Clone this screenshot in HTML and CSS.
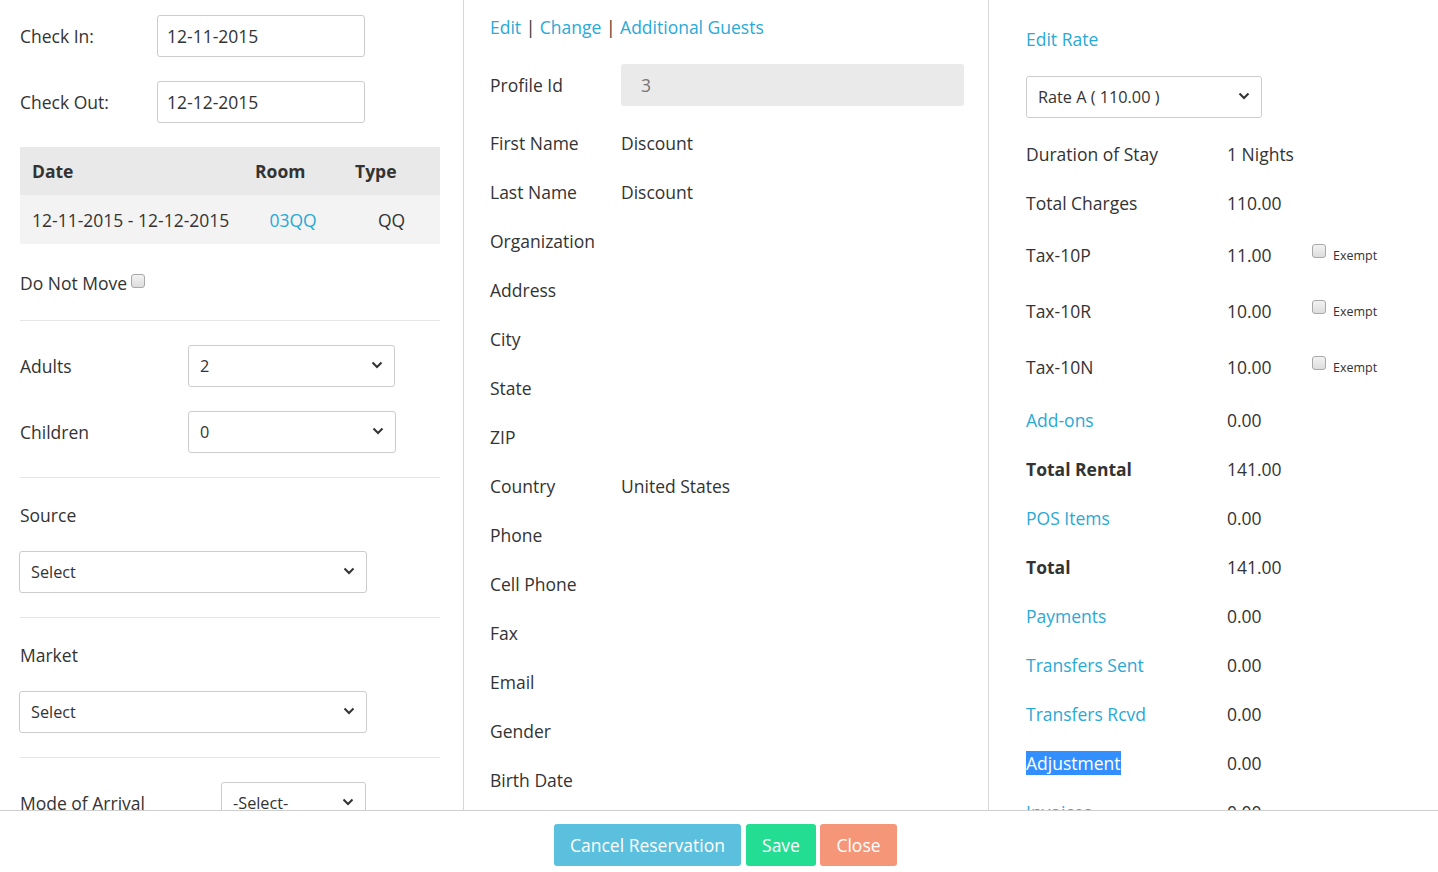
FILE: index.html
```html
<!DOCTYPE html>
<html>
<head>
<meta charset="utf-8">
<title>Reservation</title>
<link rel="stylesheet" href="styles.css">
</head>
<body>
<div class="page">
  <div class="main">
    <div class="col col-left">
      <div class="field-row mb24">
        <div class="lbl lbl-137">Check In:</div>
        <div class="textbox">12-11-2015</div>
      </div>
      <div class="field-row mb24">
        <div class="lbl lbl-137">Check Out:</div>
        <div class="textbox">12-12-2015</div>
      </div>
      <table class="rooms">
        <thead>
          <tr><th class="c1">Date</th><th class="c2">Room</th><th class="c3">Type</th></tr>
        </thead>
        <tbody>
          <tr><td class="c1">12-11-2015 - 12-12-2015</td><td class="c2 center"><a class="link">03QQ</a></td><td class="c3 center">QQ</td></tr>
        </tbody>
      </table>
      <div class="donotmove">Do Not Move<span class="cb cb-dnm"></span></div>
      <div class="sep"></div>
      <div class="field-row mb24">
        <div class="lbl lbl-168">Adults</div>
        <div class="select w207"><span>2</span><svg class="chev" width="12" height="8" viewBox="0 0 12 8"><path d="M1.5 1.5 L6 6 L10.5 1.5" fill="none" stroke="#333" stroke-width="2"/></svg></div>
      </div>
      <div class="field-row">
        <div class="lbl lbl-168">Children</div>
        <div class="select w208"><span>0</span><svg class="chev" width="12" height="8" viewBox="0 0 12 8"><path d="M1.5 1.5 L6 6 L10.5 1.5" fill="none" stroke="#333" stroke-width="2"/></svg></div>
      </div>
      <div class="sep"></div>
      <div class="section-label">Source</div>
      <div class="select w347"><span>Select</span><svg class="chev" width="12" height="8" viewBox="0 0 12 8"><path d="M1.5 1.5 L6 6 L10.5 1.5" fill="none" stroke="#333" stroke-width="2"/></svg></div>
      <div class="sep"></div>
      <div class="section-label">Market</div>
      <div class="select w347"><span>Select</span><svg class="chev" width="12" height="8" viewBox="0 0 12 8"><path d="M1.5 1.5 L6 6 L10.5 1.5" fill="none" stroke="#333" stroke-width="2"/></svg></div>
      <div class="sep"></div>
      <div class="field-row">
        <div class="lbl lbl-201">Mode of Arrival</div>
        <div class="select w145"><span>-Select-</span><svg class="chev" width="12" height="8" viewBox="0 0 12 8"><path d="M1.5 1.5 L6 6 L10.5 1.5" fill="none" stroke="#333" stroke-width="2"/></svg></div>
      </div>
    </div>

    <div class="col col-mid">
      <div class="links"><a class="link">Edit</a> | <a class="link">Change</a> | <a class="link">Additional Guests</a></div>
      <div class="field-row mt24">
        <div class="lbl lbl-131">Profile Id</div>
        <div class="ro-input">3</div>
      </div>
      <div class="info-row"><div class="lbl lbl-131">First Name</div><div>Discount</div></div>
      <div class="info-row"><div class="lbl lbl-131">Last Name</div><div>Discount</div></div>
      <div class="info-row"><div class="lbl lbl-131">Organization</div><div></div></div>
      <div class="info-row"><div class="lbl lbl-131">Address</div><div></div></div>
      <div class="info-row"><div class="lbl lbl-131">City</div><div></div></div>
      <div class="info-row"><div class="lbl lbl-131">State</div><div></div></div>
      <div class="info-row"><div class="lbl lbl-131">ZIP</div><div></div></div>
      <div class="info-row"><div class="lbl lbl-131">Country</div><div>United States</div></div>
      <div class="info-row"><div class="lbl lbl-131">Phone</div><div></div></div>
      <div class="info-row"><div class="lbl lbl-131">Cell Phone</div><div></div></div>
      <div class="info-row"><div class="lbl lbl-131">Fax</div><div></div></div>
      <div class="info-row"><div class="lbl lbl-131">Email</div><div></div></div>
      <div class="info-row"><div class="lbl lbl-131">Gender</div><div></div></div>
      <div class="info-row"><div class="lbl lbl-131">Birth Date</div><div></div></div>
    </div>

    <div class="col col-right">
      <div class="edit-rate"><a class="link">Edit Rate</a></div>
      <div class="select w236 rate-select"><span>Rate A ( 110.00 )</span><svg class="chev" width="12" height="8" viewBox="0 0 12 8"><path d="M1.5 1.5 L6 6 L10.5 1.5" fill="none" stroke="#333" stroke-width="2"/></svg></div>
      <div class="r-row mt24"><div class="r-lbl">Duration of Stay</div><div class="r-val">1 Nights</div></div>
      <div class="r-row"><div class="r-lbl">Total Charges</div><div class="r-val">110.00</div></div>
      <div class="r-row tax mt24"><div class="r-lbl">Tax-10P</div><div class="r-val">11.00</div><div class="exempt"><span class="cb"></span><span class="ex-txt">Exempt</span></div></div>
      <div class="r-row tax"><div class="r-lbl">Tax-10R</div><div class="r-val">10.00</div><div class="exempt"><span class="cb"></span><span class="ex-txt">Exempt</span></div></div>
      <div class="r-row tax"><div class="r-lbl">Tax-10N</div><div class="r-val">10.00</div><div class="exempt"><span class="cb"></span><span class="ex-txt">Exempt</span></div></div>
      <div class="r-row mt26"><div class="r-lbl"><a class="link">Add-ons</a></div><div class="r-val">0.00</div></div>
      <div class="r-row"><div class="r-lbl bold">Total Rental</div><div class="r-val">141.00</div></div>
      <div class="r-row"><div class="r-lbl"><a class="link">POS Items</a></div><div class="r-val">0.00</div></div>
      <div class="r-row"><div class="r-lbl bold">Total</div><div class="r-val">141.00</div></div>
      <div class="r-row"><div class="r-lbl"><a class="link">Payments</a></div><div class="r-val">0.00</div></div>
      <div class="r-row"><div class="r-lbl"><a class="link">Transfers Sent</a></div><div class="r-val">0.00</div></div>
      <div class="r-row"><div class="r-lbl"><a class="link">Transfers Rcvd</a></div><div class="r-val">0.00</div></div>
      <div class="r-row"><div class="r-lbl"><a class="link selected">Adjustment</a></div><div class="r-val">0.00</div></div>
      <div class="r-row"><div class="r-lbl"><a class="link">Invoices</a></div><div class="r-val">0.00</div></div>
    </div>
  </div>
  <div class="footer">
    <button class="btn btn-cancel">Cancel Reservation</button>
    <button class="btn btn-save">Save</button>
    <button class="btn btn-close">Close</button>
  </div>
</div>
</body>
</html>
```

FILE: styles.css
```css
* { box-sizing: border-box; }
html, body { margin: 0; padding: 0; }
body {
  font-family: "Open Sans", "Liberation Sans", sans-serif;
  font-size: 17.5px;
  line-height: 24px;
  color: #333;
  background: #fff;
}
.page {
  width: 1438px;
  height: 872px;
  display: flex;
  flex-direction: column;
  overflow: hidden;
}
.main {
  height: 810px;
  flex: none;
  display: flex;
  overflow: hidden;
}
.col { height: 810px; overflow: hidden; }
.col-left {
  width: 464px;
  border-right: 1px solid #d6d6d6;
  padding: 15px 23px 0 20px;
}
.col-mid {
  width: 525px;
  border-right: 1px solid #d6d6d6;
  padding: 15px 24px 0 26px;
}
.col-right {
  flex: 1;
  padding: 27px 0 0 37px;
}
.link { color: #29a9d6; text-decoration: none; cursor: pointer; }
.bold { font-weight: 700; }
.mb24 { margin-bottom: 24px; }
.mt24 { margin-top: 24px; }
.mt26 { margin-top: 26px !important; }

.field-row { display: flex; align-items: center; height: 42px; }
.lbl { flex: none; }
.lbl-137 { width: 137px; }
.lbl-168 { width: 168px; }
.lbl-201 { width: 201px; }
.lbl-131 { width: 131px; }

.textbox {
  width: 208px;
  height: 42px;
  border: 1px solid #ccc;
  border-radius: 3px;
  padding: 0 9px;
  display: flex;
  align-items: center;
}

.rooms {
  width: 420px;
  border-collapse: collapse;
  border-spacing: 0;
}
.rooms th {
  height: 48px;
  background: #e9e9e9;
  text-align: left;
  font-weight: 700;
  padding: 0 12px;
}
.rooms td {
  height: 49px;
  background: #f3f3f3;
  padding: 0 12px;
}
.rooms .c1 { width: 223px; }
.rooms .c2 { width: 100px; }
.rooms .c3 { width: 97px; }
.rooms td.center { text-align: center; padding: 0; }

.donotmove {
  margin-top: 27px;
  height: 25px;
  display: flex;
  align-items: flex-start;
}
.cb {
  display: inline-block;
  flex: none;
  width: 14px;
  height: 14px;
  border: 1px solid #a8a8a8;
  border-radius: 3px;
  background: linear-gradient(#f2f2f2, #dddddd);
}
.cb-dnm { margin: 3px 0 0 4px; }

.sep { height: 1px; background: #e6e6e6; margin: 24px 0; }

.section-label { padding-top: 1px; margin-bottom: 24px; line-height: 24px; }

.select {
  height: 42px;
  border: 1px solid #ccc;
  border-radius: 3px;
  padding: 0 11px;
  display: flex;
  align-items: center;
  justify-content: space-between;
  font-size: 16.25px;
  background: #fff;
}
.chev { flex: none; margin-top: -3px; }
.w207 { width: 207px; }
.w208 { width: 208px; }
.w347 { width: 348px; margin-left: -1px; }
.w145 { width: 145px; }
.w236 { width: 236px; }

.links { line-height: 24px; }
.ro-input {
  flex: 1;
  height: 42px;
  background: #eaeaea;
  border-radius: 3px;
  padding-left: 20px;
  display: flex;
  align-items: center;
  color: #777;
}
.info-row {
  display: flex;
  margin-top: 25px;
  line-height: 24px;
  height: 24px;
}
.col-mid .field-row.mt24 { margin-top: 25px; }

.edit-rate { line-height: 24px; }
.rate-select { margin-top: 25px; }
.r-row {
  display: flex;
  align-items: center;
  height: 24px;
  margin-top: 25px;
}
.r-row.mt24 { margin-top: 24px; }
.r-lbl { width: 201px; flex: none; }
.r-val { width: 85px; flex: none; }
.r-row.tax { height: 31px; }
.exempt {
  display: flex;
  align-items: flex-start;
  height: 31px;
  padding-top: 5px;
}
.ex-txt {
  font-size: 12.5px;
  line-height: 16px;
  margin: 4px 0 0 7px;
}
.selected { background: #338fff; color: #fff; }

.footer {
  flex: 1;
  border-top: 1px solid #cfcfcf;
  display: flex;
  justify-content: center;
  align-items: flex-start;
  padding: 13px 0 0 13px;
}
.btn {
  height: 42px;
  border: none;
  border-radius: 3px;
  color: #fff;
  font-family: "Open Sans", "Liberation Sans", sans-serif;
  font-size: 17.5px;
  padding: 0 16px;
  cursor: pointer;
}
.btn-cancel { background: #5bc0de; width: 187px; padding: 0; }
.btn-save { background: #23de92; width: 70px; padding: 0; margin-left: 5px; }
.btn-close { background: #f59679; width: 77px; padding: 0; margin-left: 4px; }
```
